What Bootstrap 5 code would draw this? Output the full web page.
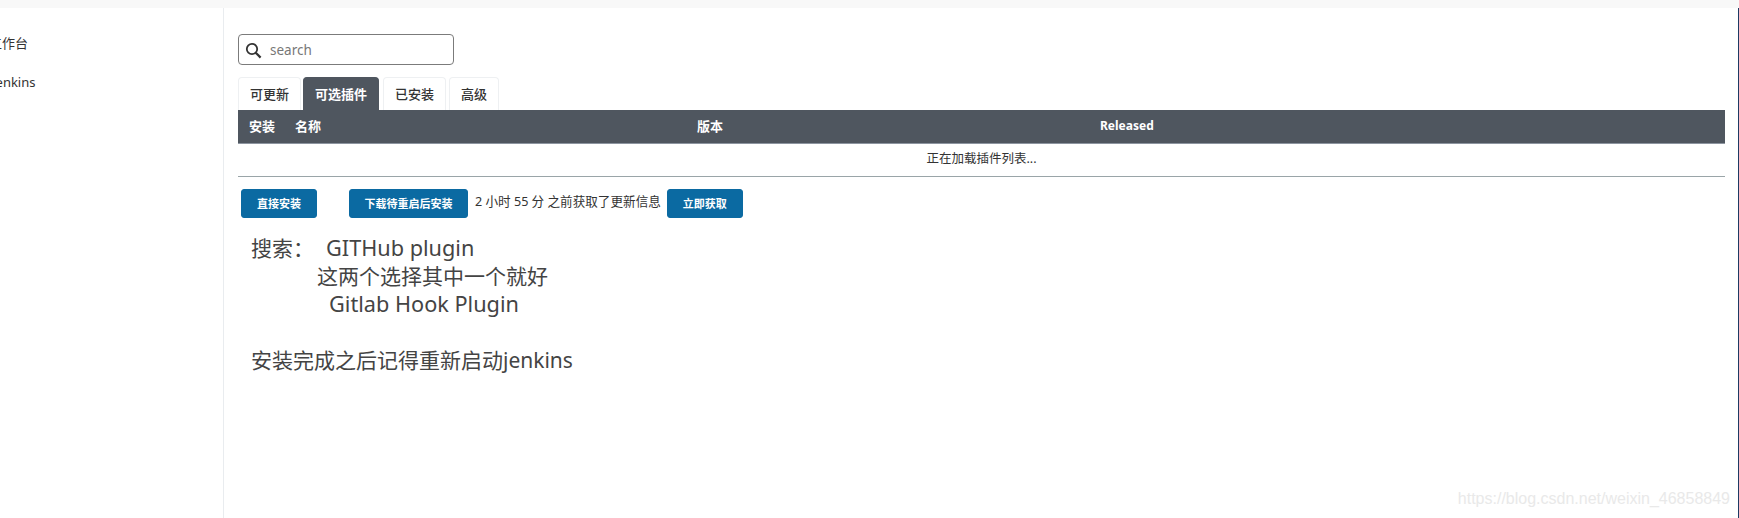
<!DOCTYPE html>
<html lang="zh">
<head>
<meta charset="utf-8">
<title>插件管理</title>
<link href="https://cdn.jsdelivr.net/npm/bootstrap@5.3.0/dist/css/bootstrap.min.css" rel="stylesheet">
<style>
html,body{height:518px;overflow:hidden}
body{background:#fff;color:#333;font-family:"Noto Sans","Noto Sans CJK SC",sans-serif;font-size:13px}
.topstrip{height:8px;background:#f8f8f8}
.shell{height:510px;border-right:1px solid #1d3a63;position:relative}
.sidebar{width:224px;flex:none;border-right:1px solid #e9ecef;overflow:hidden;padding-top:24px}
.side-item{margin-left:-11px;height:39px;line-height:22px;font-size:13px;color:#333}
.side-item.latin-item{margin-left:-8px}
.main-area{flex:1;padding:26px 13px 0 14px;min-width:0}
.search-box{width:216px;height:31px;border:1px solid #7b7b7b;border-radius:4px;padding:1px 6px 0}
.search-box svg{flex:none}
.search-box input{border:0;outline:0;padding:0;margin-left:8px;width:160px;font-size:13.5px;color:#6d6d6d;background:transparent}
.search-box input::placeholder{color:#777;opacity:1}
.plugin-tabs{margin-top:12px;height:33px}
.plugin-tab{height:33px;line-height:32px;padding:0 11px;border:1px solid #eef0f2;border-bottom:0;border-radius:4px 4px 0 0;background:#fff;color:#333;font-size:13px;font-weight:500;text-decoration:none;margin-right:2px}
.plugin-tab.on{background:#4f565f;border-color:#4f565f;color:#fff;font-weight:700;margin-right:4px}
.tab-third{margin-right:3px}
.plugin-table{table-layout:fixed;margin:0;width:100%;font-size:13px;border-bottom:1px solid #9aa5a8}
.plugin-table thead th{background:#4f565f;color:#fff;height:33px;padding:0 0 0 11px;font-weight:700;border-bottom:1px solid #8d95a0;vertical-align:middle}
.plugin-table thead .latin-head{font-size:12px}
.plugin-table tbody td{height:33px;padding:0;text-align:center;vertical-align:middle;border:0;color:#333;font-size:12.5px}
.w-install{width:46px}.w-name{width:402px}.w-version{width:403px}
.action-row{margin-top:12px;padding-left:3px;height:30px}
.act-btn{--bs-btn-bg:#0b6aa2;--bs-btn-border-color:#0b6aa2;--bs-btn-color:#fff;--bs-btn-hover-bg:#0b6aa2;--bs-btn-hover-color:#fff;width:76px;height:29px;padding:0;font-size:11px;font-weight:700;border-radius:3px;line-height:28px}
.act-btn.wide{width:119px;margin-left:32px}
.update-note{font-size:12.6px;margin:-3px 6px 0 7px;white-space:nowrap}
.notes{margin:15px 0 0 13px;font-size:21px;line-height:28px;color:#444;font-weight:400}
.notes div{min-height:28px}
.latin-big{font-size:21.7px}
.in-a{padding-left:12px}.in-b{padding-left:66px}.in-c{padding-left:78px}
.wm{position:absolute;right:8px;bottom:7px;font-family:"Liberation Sans",sans-serif;font-size:16px;color:#e9e9e9}
</style>
</head>
<body>
<div class="topstrip"></div>
<div class="shell d-flex">
  <aside class="sidebar">
    <div class="side-item">工作台</div>
    <div class="side-item latin-item">Jenkins</div>
  </aside>
  <main class="main-area">
    <div class="search-box d-flex align-items-center">
      <svg width="17" height="17" viewBox="0 0 17 17" fill="none" stroke="#333" stroke-width="1.8"><circle cx="7" cy="7" r="5.2"/><path d="M10.8 10.8 15.6 15.6" stroke-width="2.2"/></svg>
      <input type="text" placeholder="search">
    </div>
    <div class="plugin-tabs d-flex">
      <a class="plugin-tab" href="#">可更新</a>
      <a class="plugin-tab on" href="#">可选插件</a>
      <a class="plugin-tab tab-third" href="#">已安装</a>
      <a class="plugin-tab" href="#">高级</a>
    </div>
    <table class="table plugin-table">
      <thead>
        <tr><th class="w-install">安装</th><th class="w-name">名称</th><th class="w-version">版本</th><th class="latin-head">Released</th></tr>
      </thead>
      <tbody>
        <tr><td colspan="4">正在加载插件列表...</td></tr>
      </tbody>
    </table>
    <div class="action-row d-flex align-items-center">
      <button class="btn act-btn" type="button">直接安装</button>
      <button class="btn act-btn wide" type="button">下载待重启后安装</button>
      <span class="update-note">2 小时 55 分 之前获取了更新信息</span>
      <button class="btn act-btn" type="button">立即获取</button>
    </div>
    <div class="notes">
      <div>搜索：<span class="in-a latin-big">GITHub plugin</span></div>
      <div class="in-b">这两个选择其中一个就好</div>
      <div class="in-c latin-big">Gitlab Hook Plugin</div>
      <div></div>
      <div>安装完成之后记得重新启动jenkins</div>
    </div>
  </main>
  <div class="wm">https://blog.csdn.net/weixin_46858849</div>
</div>
</body>
</html>
